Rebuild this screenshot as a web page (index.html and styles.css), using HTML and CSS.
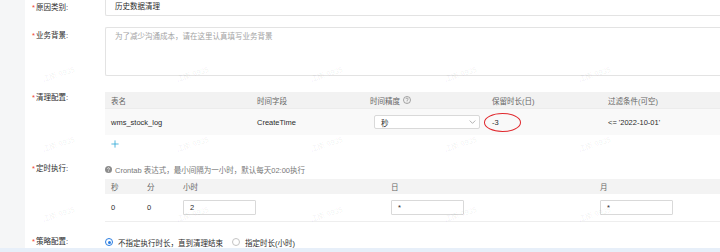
FILE: index.html
```html
<!DOCTYPE html>
<html lang="zh-CN">
<head>
<meta charset="utf-8">
<title>清理配置</title>
<link rel="stylesheet" href="styles.css">
</head>
<body>
<div class="app">
  <div class="main">
    <aside class="side"></aside>
    <section class="card">
      <div class="form">
        <div class="row row-reason">
          <div class="label"><span class="req">*</span>原因类别:</div>
          <div class="control"><div class="input">历史数据清理</div></div>
        </div>

        <div class="row row-bg">
          <div class="label"><span class="req">*</span>业务背景:</div>
          <div class="control"><div class="textarea">为了减少沟通成本，请在这里认真填写业务背景</div></div>
        </div>

        <div class="row row-clean">
          <div class="label"><span class="req">*</span>清理配置:</div>
          <div class="control">
            <div class="grid5 thead">
              <div class="cell">表名</div>
              <div class="cell">时间字段</div>
              <div class="cell">时间精度
                <svg class="qicon" viewBox="0 0 10 10" width="8" height="8"><circle cx="5" cy="5" r="4.4" fill="none" stroke="#777" stroke-width="0.8"/><path d="M3.6 3.9a1.4 1.4 0 1 1 2 1.3c-.4.2-.6.4-.6.9v.3" fill="none" stroke="#777" stroke-width="0.8"/><circle cx="5" cy="7.4" r="0.5" fill="#777"/></svg>
              </div>
              <div class="cell">保留时长(日)</div>
              <div class="cell">过滤条件(可空)</div>
            </div>
            <div class="grid5 tbody">
              <div class="cell">wms_stock_log</div>
              <div class="cell">CreateTime</div>
              <div class="cell">
                <div class="select"><span>秒</span>
                  <svg class="chev" viewBox="0 0 8 5" width="7" height="4"><path d="M0.5 0.7L4 4.2L7.5 0.7" fill="none" stroke="#888" stroke-width="0.8"/></svg>
                </div>
              </div>
              <div class="cell cell-mark">-3<span class="ellipse"></span></div>
              <div class="cell">&lt;= '2022-10-01'</div>
            </div>
            <div class="add">
              <svg viewBox="0 0 10 10" width="8" height="8"><path d="M5 0.5V9.5M0.5 5H9.5" stroke="#2aa6d6" stroke-width="1"/></svg>
            </div>
          </div>
        </div>

        <div class="row row-cron">
          <div class="label"><span class="req">*</span>定时执行:</div>
          <div class="control">
            <div class="tip">
              <svg class="tipicon" viewBox="0 0 10 10" width="7" height="7"><circle cx="5" cy="5" r="5" fill="#8c8c8c"/><path d="M3.6 3.9a1.4 1.4 0 1 1 2 1.3c-.4.2-.6.4-.6.9v.3" fill="none" stroke="#fff" stroke-width="1"/><circle cx="5" cy="7.5" r="0.6" fill="#fff"/></svg>
              <span>Crontab 表达式，最小间隔为一小时，默认每天02:00执行</span>
            </div>
            <div class="grid-cron chead">
              <div class="cell">秒</div>
              <div class="cell">分</div>
              <div class="cell">小时</div>
              <div class="cell">日</div>
              <div class="cell">月</div>
            </div>
            <div class="grid-cron cbody">
              <div class="cell">0</div>
              <div class="cell">0</div>
              <div class="cell"><div class="small-input">2</div></div>
              <div class="cell"><div class="small-input">*</div></div>
              <div class="cell"><div class="small-input">*</div></div>
            </div>
          </div>
        </div>

        <div class="row row-strategy">
          <div class="label"><span class="req">*</span>策略配置:</div>
          <div class="control radios">
            <span class="radio radio-on"></span><span class="radio-text">不指定执行时长，直到清理结束</span>
            <span class="radio"></span><span class="radio-text">指定时长(小时)</span>
          </div>
        </div>
      </div>
    </section>
  </div>
  <div class="footer"></div>
</div>

<div class="watermarks">
  <span>江南 9935</span><span>江南 9935</span><span>江南 9935</span><span>江南 9935</span><span>江南 9935</span>
  <span>江南 9935</span><span>江南 9935</span><span>江南 9935</span><span>江南 9935</span><span>江南 9935</span>
  <span>江南 9935</span><span>江南 9935</span><span>江南 9935</span><span>江南 9935</span><span>江南 9935</span>
</div>
</body>
</html>
```

FILE: styles.css
```css
* { box-sizing: border-box; }

html, body {
  margin: 0;
  padding: 0;
}

body {
  width: 720px;
  height: 252px;
  overflow: hidden;
  position: relative;
  font-family: "Liberation Sans", "Noto Sans CJK SC", sans-serif;
  font-size: 7.5px;
  color: #2b2b2b;
  background: #fff;
}

.app {
  display: flex;
  flex-direction: column;
  height: 252px;
}

.main {
  display: flex;
  height: 248px;
  overflow: hidden;
}

.side {
  width: 25px;
  flex: none;
  background: #f5f6f7;
}

.card {
  flex: 1;
  background: #fff;
  overflow: hidden;
}

.footer {
  height: 4px;
  background: #e7eff9;
}

.form {
  display: flex;
  flex-direction: column;
  padding-left: 7px;
  margin-top: -2px;
}

.row {
  display: flex;
}

.label {
  width: 73px;
  flex: none;
  line-height: 12px;
  color: #2b2b2b;
  white-space: nowrap;
}

.req {
  color: #f0412f;
  margin-right: 1px;
}

.control {
  flex: 1;
  min-width: 0;
}

/* row 1 */
.row-reason .label { padding-top: 3.5px; }

.input {
  width: 100%;
  height: 18px;
  border: 1px solid #e3e3e3;
  border-right: none;
  border-radius: 2px 0 0 2px;
  padding: 0 9px;
  line-height: 16px;
  color: #2b2b2b;
}

/* row 2 */
.row-bg { margin-top: 11px; }
.row-bg .label { padding-top: 3px; }

.textarea {
  width: 100%;
  height: 49px;
  border: 1px solid #e3e3e3;
  border-right: none;
  border-radius: 2px 0 0 2px;
  padding: 3px 9px;
  line-height: 11px;
  color: #a3a3a3;
}

/* row 3 table */
.row-clean { margin-top: 16px; }

.grid5 {
  display: grid;
  grid-template-columns: 146px 113px 122px 116px 1fr;
  align-items: center;
}

.cell {
  padding-left: 6px;
  white-space: nowrap;
  display: flex;
  align-items: center;
}

.thead {
  height: 16px;
  background: #f2f2f2;
  color: #666;
}

.qicon {
  margin-left: 3px;
}

.tbody {
  height: 27px;
  background: #f9f9f9;
  border-top: 1px solid #ececec;
  color: #2b2b2b;
}

.select {
  margin-left: 4px;
  width: 106px;
  height: 14px;
  border: 1px solid #d9d9d9;
  border-radius: 2px;
  background: #fff;
  display: flex;
  align-items: center;
  justify-content: space-between;
  padding: 0 3px 0 6px;
}

.cell-mark {
  position: relative;
}

.ellipse {
  position: absolute;
  left: -2px;
  top: 50%;
  width: 37px;
  height: 19px;
  margin-top: -9.5px;
  border: 1.5px solid #e0262b;
  border-radius: 50%;
}

.add {
  height: 20px;
  display: flex;
  align-items: center;
  padding-left: 6px;
  padding-bottom: 2px;
}

/* row 4 cron */
.row-cron { margin-top: 8px; }

.tip {
  height: 12px;
  display: flex;
  align-items: center;
  color: #777;
  white-space: nowrap;
}

.tipicon {
  margin-right: 3px;
}

.grid-cron {
  display: grid;
  grid-template-columns: 36px 36px 208px 209px 1fr;
  align-items: center;
}

.chead {
  margin-top: 4px;
  height: 15px;
  background: #f3f3f3;
  color: #666;
}

.cbody {
  height: 28px;
  border-bottom: 1px solid #eee;
  color: #2b2b2b;
}

.small-input {
  width: 73px;
  height: 15px;
  border: 1px solid #d9d9d9;
  border-radius: 1px;
  padding-left: 6px;
  line-height: 13px;
  background: #fff;
}

/* row 5 strategy */
.row-strategy { margin-top: 14px; }

.radios {
  display: flex;
  align-items: center;
  height: 12px;
  white-space: nowrap;
}

.radio {
  width: 8px;
  height: 8px;
  border-radius: 50%;
  border: 1px solid #c4c4c4;
  background: #fff;
  flex: none;
  position: relative;
}

.radio-on {
  border-color: #2a7de1;
}

.radio-on::after {
  content: "";
  position: absolute;
  left: 1.5px;
  top: 1.5px;
  width: 3px;
  height: 3px;
  border-radius: 50%;
  background: #2a7de1;
}

.radio-text {
  margin-left: 5px;
  margin-right: 9px;
  color: #2b2b2b;
}

/* watermark overlay */
.watermarks {
  position: absolute;
  left: -9px;
  top: 38px;
  width: 670px;
  height: 210px;
  display: grid;
  grid-template-columns: repeat(5, 134px);
  grid-auto-rows: 70px;
  pointer-events: none;
}

.watermarks span {
  display: flex;
  align-items: center;
  justify-content: center;
  transform: rotate(-18deg);
  color: rgba(0, 0, 0, 0.07);
  font-size: 7.5px;
  white-space: nowrap;
}
```
